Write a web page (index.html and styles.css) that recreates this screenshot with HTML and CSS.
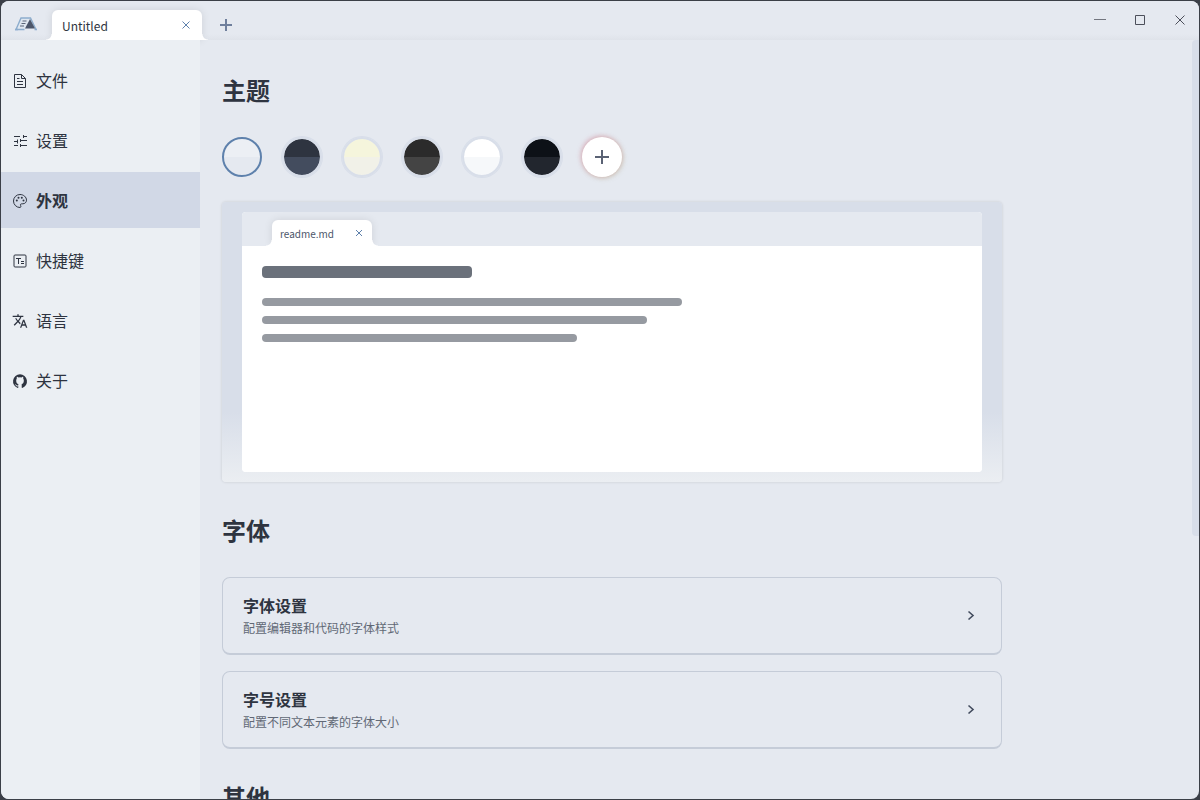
FILE: index.html
```html
<!DOCTYPE html>
<html lang="zh-CN">
<head>
<meta charset="utf-8">
<meta name="viewport" content="width=device-width, initial-scale=1">
<title>Untitled</title>
<link rel="stylesheet" href="styles.css">
</head>
<body>
<div class="window">
  <header class="titlebar">
    <svg class="logo" viewBox="0 0 24 16" aria-hidden="true">
      <path d="M7 2H16L10.500 13.500H2Z" fill="#dfe7f0"/>
      <path d="M10.500 13.500H2L7 2H16.500L22 13.500" stroke="#8dadcd" stroke-width="1.400"/>
      <path d="M8.500 5H12.500M7.500 7.500H11.500M6 10H10" stroke="#5c6679" stroke-width="1.100"/>
      <path d="M16 3L21 12.500H11Z" fill="#4c566a"/>
      <path d="M1 13.500H4M20.500 13.500H23" stroke="#8dadcd" stroke-width="1.400"/>
    </svg>
    <div class="tab">
      <span>Untitled</span>
      <button class="tab-close" aria-label="关闭标签"><svg viewBox="0 0 8 8"><path d="M.5.5l7 7M7.500.5l-7 7"/></svg></button>
    </div>
    <button class="new-tab" aria-label="新建标签"><svg viewBox="0 0 12 12"><path d="M6 0v12M0 6h12"/></svg></button>
    <div class="window-controls">
      <button aria-label="最小化"><svg viewBox="0 0 12 12"><path d="M0 5.500h12" opacity=".75"/></svg></button>
      <button aria-label="最大化"><svg viewBox="0 0 12 12"><path d="M1.500 1.500h9v9h-9z"/></svg></button>
      <button aria-label="关闭"><svg viewBox="0 0 12 12"><path d="M1.500 1.500l9 9M10.500 1.500l-9 9"/></svg></button>
    </div>
  </header>
  <div class="body">
    <nav class="sidebar">
      <a class="nav-item" href="#file"><svg viewBox="0 0 16 16"><path class="outline" d="M2.500 1.500h7l4 4v9h-11zM9.500 1.500v4h4M5 5.500h2.500M5 8.500h6M5 11.500h6"/></svg>文件</a>
      <a class="nav-item" href="#settings"><svg viewBox="0 0 16 16"><path class="outline" d="M2 3.500h6M11.500 2v3M11.500 3.500H15M2 8.500h3M5.500 6.500v4M8 7.500h7M8.500 6v3M2 12.500h4M8.500 11v3M8.500 12.500H15"/></svg>设置</a>
      <a class="nav-item active" href="#appearance" aria-current="page"><svg viewBox="0 0 16 16"><path class="outline" d="M8 1.500c3.600 0 6.500 2.600 6.500 5.700 0 2-1.600 3.600-3.600 3.600H9.600c-.7 0-1.200.5-1.200 1.100 0 .7.500.8.500 1.500 0 .6-.4 1.100-.9 1.100a6.500 6.500 0 1 1 0-13z"/><circle cx="4.800" cy="7.500" r="1"/><circle cx="6.500" cy="4.700" r="1"/><circle cx="9.800" cy="4.700" r="1"/><circle cx="11.500" cy="7.500" r="1"/></svg>外观</a>
      <a class="nav-item" href="#shortcuts"><svg viewBox="0 0 16 16"><rect class="outline" x="2" y="2" width="12" height="12" rx="1"/><path class="outline" d="M4 5.500h5M6.500 5.500V11M9 8.500h3M9 10.500h3"/></svg>快捷键</a>
      <a class="nav-item" href="#language"><svg viewBox="0 0 24 24"><path d="M12.870 15.070l-2.540-2.510.03-.03A17.520 17.520 0 0 0 14.070 6H17V4h-7V2H8v2H1v2h11.170C11.500 7.920 10.440 9.750 9 11.350 8.070 10.320 7.300 9.190 6.690 8h-2c.73 1.630 1.730 3.170 2.980 4.560l-5.090 5.020L4 19l5-5 3.110 3.110zM18.500 10h-2L12 22h2l1.120-3h4.750L21 22h2zm-2.620 7l1.620-4.330L19.120 17z"/></svg>语言</a>
      <a class="nav-item" href="#about"><svg viewBox="0 0 24 24"><path d="M12 2a10.500 10.500 0 0 0-3.300 20.450c.55.1.75-.24.75-.53v-1.950c-3.060.66-3.700-1.300-3.700-1.300-.5-1.270-1.220-1.610-1.220-1.610-1-.68.07-.67.07-.67 1.100.08 1.690 1.140 1.690 1.140.98 1.680 2.570 1.200 3.200.91v-1.800C7.500 16 6.300 14.600 6.300 11.500c0-1.200.2-2.180.9-2.950-.11-.28-.3-1.400.11-2.910 0 0 .92 0 2.500 1.120a10.500 10.500 0 0 1 4.400 0c1.580-1.120 2.500-1.120 2.500-1.120.4 1.510.22 2.630.11 2.910.7.770.9 1.750.9 2.950 0 3.100-1.200 4.500-3.150 5.140v5.280c0 .29.200.64.760.53A10.500 10.500 0 0 0 12 2z"/></svg>关于</a>
    </nav>
    <div class="view">
      <main class="content">
        <div class="column">
          <h2>主题</h2>
          <div class="themes">
            <button class="swatch frost selected" aria-label="Frost"></button>
            <button class="swatch night" aria-label="Night"></button>
            <button class="swatch cream" aria-label="Cream"></button>
            <button class="swatch charcoal" aria-label="Charcoal"></button>
            <button class="swatch white" aria-label="White"></button>
            <button class="swatch black" aria-label="Black"></button>
            <button class="add-theme" aria-label="添加主题"><svg viewBox="0 0 14 14"><path d="M7 0v14M0 7h14"/></svg></button>
          </div>
          <section class="preview">
            <div class="preview-window">
              <div class="preview-bar">
                <div class="tab tab-small">
                  <span>readme.md</span>
                  <button class="tab-close" aria-label="关闭"><svg viewBox="0 0 8 8"><path d="M1 1l6 6M7 1l-6 6"/></svg></button>
                </div>
              </div>
              <div class="preview-page">
                <div class="line title"></div>
                <div class="line long"></div>
                <div class="line medium"></div>
                <div class="line short"></div>
              </div>
            </div>
          </section>
          <h2>字体</h2>
          <div class="cards">
            <button class="card">
              <span class="card-text"><strong>字体设置</strong><small>配置编辑器和代码的字体样式</small></span>
              <svg viewBox="0 0 8 12"><path d="M1.500 1.500L6 5.500l-4.500 4"/></svg>
            </button>
            <button class="card">
              <span class="card-text"><strong>字号设置</strong><small>配置不同文本元素的字体大小</small></span>
              <svg viewBox="0 0 8 12"><path d="M1.500 1.500L6 5.500l-4.500 4"/></svg>
            </button>
          </div>
          <h2>其他</h2>
        </div>
      </main>
      <div class="scroll-thumb"></div>
    </div>
  </div>
</div>
</body>
</html>
```

FILE: styles.css
```css
* {
  box-sizing: border-box;
}

body {
  margin: 0;
  background: #3b3f47;
  color: #2e3440;
  font-family: "Noto Sans CJK SC", "Noto Sans", sans-serif;
  font-size: 16px;
}

button {
  border: 0;
  padding: 0;
  background: none;
  color: inherit;
  font: inherit;
}

svg {
  display: block;
  fill: none;
  stroke: none;
}

.window {
  display: flex;
  flex-direction: column;
  height: calc(100vh - 2px);
  margin: 1px;
  border-radius: 8px;
  overflow: hidden;
  background: #e5e9f0;
}

.titlebar {
  display: flex;
  align-items: flex-end;
  flex: none;
  height: 39px;
  padding-left: 13px;
  background: linear-gradient(#e5e9f0 85%, #dfe3ea);
}

.logo {
  width: 24px;
  height: 16px;
  margin: 0 14px 8px 0;
}

.tab {
  position: relative;
  display: flex;
  align-items: center;
  justify-content: space-between;
  width: 150px;
  height: 30px;
  padding: 2px 12px 0 10px;
  border-radius: 6px 6px 0 0;
  background: #fff;
  box-shadow: 0 0 8px rgba(0, 0, 0, 0.1);
  font-size: 12px;
  line-height: 20px;
}

.tab::before,
.tab::after {
  content: "";
  position: absolute;
  bottom: 0;
  width: 6px;
  height: 6px;
}

.tab::before {
  right: 100%;
  background: radial-gradient(circle at 0 0, transparent 5px, #fff 6px);
}

.tab::after {
  left: 100%;
  background: radial-gradient(circle at 100% 0, transparent 5px, #fff 6px);
}

.tab-close svg {
  width: 8px;
  height: 8px;
  margin-bottom: 3px;
  stroke: #5e81ac;
}

.new-tab {
  margin: 0 0 9px 18px;
}

.new-tab svg {
  width: 12px;
  height: 12px;
  stroke: #6f7f9c;
  stroke-width: 2;
}

.window-controls {
  display: flex;
  align-self: stretch;
  margin: 0 -1px 2px auto;
}

.window-controls button {
  display: grid;
  place-items: center;
  width: 40px;
}

.window-controls svg {
  width: 12px;
  height: 12px;
  stroke: #4c4f5a;
}

.body {
  position: relative;
  display: flex;
  flex: 1;
  min-height: 0;
}

.sidebar {
  display: flex;
  flex-direction: column;
  gap: 4px;
  flex: none;
  width: 199px;
  padding-top: 12px;
  background: #ebeff3;
}

.nav-item {
  display: flex;
  align-items: center;
  gap: 8px;
  height: 56px;
  padding: 0 11px;
  color: #2e3440;
  line-height: 24px;
  text-decoration: none;
}

.nav-item svg {
  width: 16px;
  height: 16px;
  margin-top: 2px;
  fill: #2e3440;
}

.nav-item .outline {
  fill: none;
  stroke: #2e3440;
}

.nav-item.active {
  background: #d1d8e6;
  font-weight: 700;
}

.view {
  position: relative;
  display: flex;
  flex: 1;
  min-width: 0;
}

.content {
  flex: 1;
  min-width: 0;
  padding: 2px 22px 0;
  overflow-y: auto;
  scrollbar-width: none;
}

.column {
  max-width: 780px;
}

h2 {
  margin: 30px 0 29px;
  font-size: 24px;
  line-height: 36px;
}

.themes {
  display: flex;
  gap: 20px;
  margin-bottom: 25px;
}

.swatch,
.add-theme {
  width: 40px;
  height: 40px;
  border-radius: 50%;
}

.swatch {
  border: 2px solid #d8dee9;
  box-shadow: 0 0 0 1px #d8dee9;
  background: linear-gradient(var(--top) 50%, var(--bottom) 50%) padding-box;
}

.swatch.selected {
  border-color: #5e81ac;
  box-shadow: none;
}

.frost { --top: #eceff4; --bottom: #e5e9f0; }
.night { --top: #2e3440; --bottom: #434c5e; }
.cream { --top: #f5f5dc; --bottom: #f1f1e8; }
.charcoal { --top: #2b2b2b; --bottom: #444444; }
.white { --top: #ffffff; --bottom: #f6f8fa; }
.black { --top: #0d1117; --bottom: #22262e; }

.add-theme {
  display: grid;
  place-items: center;
  background: #fff;
  box-shadow: -1px -1px 5px rgba(210, 100, 130, 0.4), 1px 1px 5px rgba(160, 150, 90, 0.35);
}

.add-theme svg {
  width: 14px;
  height: 14px;
  stroke: #5a6274;
  stroke-width: 2;
}

.preview {
  padding: 10px 20px;
  border-radius: 4px;
  background: linear-gradient(#d8dee9 75%, #ebeef2);
  box-shadow: 0 0 3px rgba(0, 0, 0, 0.14);
}

.preview-window {
  border-radius: 4px;
  overflow: hidden;
  background: #fff;
}

.preview-bar {
  display: flex;
  align-items: flex-end;
  height: 34px;
  padding-left: 30px;
  background: #e5e9f0;
}

.tab-small {
  width: 100px;
  height: 26px;
  padding: 2px 9px 0 8px;
  font-size: 10px;
  color: #4c566a;
}

.preview-page {
  position: relative;
  display: flex;
  flex-direction: column;
  gap: 10px;
  min-height: 226px;
  padding: 20px;
  background: #fff;
}

.line {
  height: 8px;
  border-radius: 4px;
  background: #969aa1;
}

.line.title {
  width: 30%;
  height: 12px;
  margin-bottom: 10px;
  background: #6b717b;
}

.line.long { width: 60%; }
.line.medium { width: 55%; }
.line.short { width: 45%; }

.cards {
  display: grid;
  gap: 16px;
}

.card {
  display: flex;
  align-items: center;
  justify-content: space-between;
  height: 78px;
  padding: 0 26px 0 20px;
  border: 1px solid #c5ccd8;
  border-bottom-width: 2px;
  border-radius: 8px;
  text-align: left;
}

.card-text {
  display: grid;
  gap: 1px;
}

.card strong {
  font-size: 16px;
  line-height: 24px;
}

.card small {
  color: #616875;
  font-size: 12px;
  line-height: 20px;
}

.card svg {
  width: 8px;
  height: 12px;
  stroke: #434c5e;
  stroke-width: 1.6;
}

.scroll-thumb {
  position: absolute;
  top: 0;
  right: 0;
  width: 7px;
  height: 65.4%;
  border-radius: 4px 0 0 4px;
  background: #d8dee9;
}
```
